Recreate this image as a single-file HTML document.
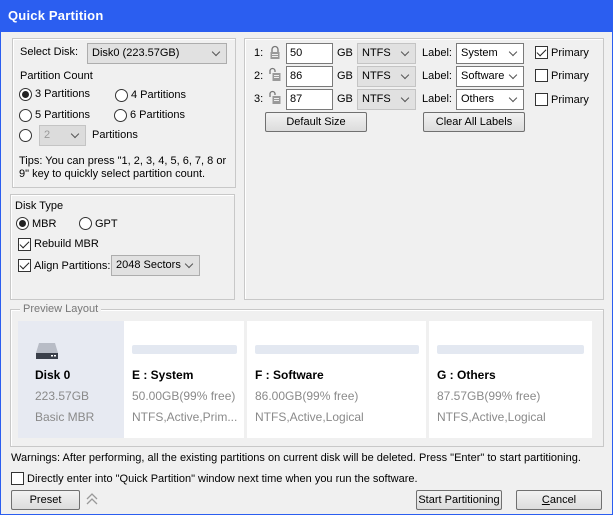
<!DOCTYPE html>
<html><head><style>
*{box-sizing:border-box;margin:0;padding:0}
body{width:613px;height:515px;overflow:hidden;background:#2b5ef0;font-family:"Liberation Sans",sans-serif;font-size:11px;color:#000;position:relative}
.a{position:absolute;white-space:nowrap}
.title{left:8px;top:8px;color:#fff;font-size:13px;font-weight:bold;letter-spacing:.2px}
.grp{position:absolute;border:1px solid #c8c8c8;box-shadow:inset 1px 1px 0 #fff}
.sel{position:absolute;border:1px solid #adadad;background:#e1e1e1;height:21px;padding:3px 4px}
.sel:after{content:"";position:absolute;right:7px;top:5px;width:5px;height:5px;border-right:1px solid #555;border-bottom:1px solid #555;transform:rotate(45deg)}
.inp{position:absolute;border:1px solid #7a7a7a;background:#fff;height:21px;padding:3px 3px}
.rad{position:absolute;width:13px;height:13px;border:1px solid #333;border-radius:50%;background:#fff}
.rad.on:after{content:"";position:absolute;left:2px;top:2px;width:7px;height:7px;border-radius:50%;background:#222}
.chk{position:absolute;width:13px;height:13px;border:1px solid #333;background:#fff}
.chk.on:after{content:"";position:absolute;left:3px;top:0px;width:4px;height:8px;border-right:1.5px solid #222;border-bottom:1.5px solid #222;transform:rotate(45deg)}
.btn{position:absolute;border:1px solid #707070;background:linear-gradient(#f2f2f2,#dcdcdc);height:20px;text-align:center;line-height:18px;border-radius:2px}
.cell{position:absolute;top:321px;height:117px;background:#fff}
.bar{position:absolute;top:24px;height:9px;background:#e3e8f1;border-radius:2px}
.cell .t{position:absolute;top:47px;font-weight:bold;font-size:12px}
.cell .g{position:absolute;color:#8a8a8a;font-size:12px}
</style></head><body>
<div class="a title">Quick Partition</div>
<div style="position:absolute;left:0;top:32px;width:613px;height:483px;background:#f0f0f0;border-left:1px solid #2b5ef0;border-right:1px solid #2b5ef0;border-bottom:1px solid #2b5ef0"></div>

<div class="grp" style="left:12px;top:38px;width:224px;height:150px"></div>
<div class="a" style="left:20px;top:46px">Select Disk:</div>
<div class="sel" style="left:87px;top:43px;width:140px">Disk0 (223.57GB)</div>
<div class="a" style="left:20px;top:70px">Partition Count</div>
<div class="rad on" style="left:19px;top:88px"></div><div class="a" style="left:35px;top:88px">3 Partitions</div>
<div class="rad" style="left:115px;top:89px"></div><div class="a" style="left:131px;top:89px">4 Partitions</div>
<div class="rad" style="left:19px;top:109px"></div><div class="a" style="left:35px;top:109px">5 Partitions</div>
<div class="rad" style="left:114px;top:109px"></div><div class="a" style="left:130px;top:109px">6 Partitions</div>
<div class="rad" style="left:19px;top:129px"></div>
<div class="sel" style="left:39px;top:125px;width:47px;height:21px;border-color:#c4c4c4;background:#dcdcdc;color:#999">2</div>
<div class="a" style="left:92px;top:129px">Partitions</div>
<div class="a" style="left:19px;top:155px;line-height:13px">Tips: You can press "1, 2, 3, 4, 5, 6, 7, 8 or<br>9" key to quickly select partition count.</div>

<div class="grp" style="left:10px;top:194px;width:225px;height:106px"></div>
<div class="a" style="left:15px;top:200px">Disk Type</div>
<div class="rad on" style="left:16px;top:217px"></div><div class="a" style="left:32px;top:218px">MBR</div>
<div class="rad" style="left:79px;top:217px"></div><div class="a" style="left:95px;top:218px">GPT</div>
<div class="chk on" style="left:18px;top:238px"></div><div class="a" style="left:34px;top:238px">Rebuild MBR</div>
<div class="chk on" style="left:18px;top:259px"></div><div class="a" style="left:34px;top:260px">Align Partitions:</div>
<div class="sel" style="left:111px;top:255px;width:89px">2048 Sectors</div>

<div class="grp" style="left:244px;top:38px;width:360px;height:262px"></div>
<div class="a" style="left:254px;top:47px">1:</div>
<div class="a" style="left:254px;top:70px">2:</div>
<div class="a" style="left:254px;top:93px">3:</div>
<svg class="a" style="left:268px;top:45px" width="14" height="60" viewBox="0 0 14 60">
<g fill="none" stroke="#777" stroke-width="1.3"><path d="M4 7V4.5a3 3 0 0 1 6 0V7"/><path d="M2 29V26a2.5 2.5 0 0 1 5 0V27"/><path d="M2 52V49a2.5 2.5 0 0 1 5 0V50"/></g>
<g fill="#999"><rect x="2.5" y="7" width="9" height="7"/><rect x="4.5" y="28" width="8" height="8"/><rect x="4.5" y="51" width="8" height="8"/></g>
<g stroke="#eee"><path d="M4 9.5h6M4 11.5h6M6 30.5h5M6 32.5h5M6 53.5h5M6 55.5h5"/></g></svg>
<div class="inp" style="left:286px;top:43px;width:47px">50</div>
<div class="inp" style="left:286px;top:66px;width:47px">86</div>
<div class="inp" style="left:286px;top:89px;width:47px">87</div>
<div class="a" style="left:337px;top:47px">GB</div><div class="a" style="left:337px;top:70px">GB</div><div class="a" style="left:337px;top:93px">GB</div>
<div class="sel" style="left:357px;top:43px;width:59px;border-color:#c4c4c4">NTFS</div>
<div class="sel" style="left:357px;top:66px;width:59px;border-color:#c4c4c4">NTFS</div>
<div class="sel" style="left:357px;top:89px;width:59px;border-color:#c4c4c4">NTFS</div>
<div class="a" style="left:422px;top:47px">Label:</div><div class="a" style="left:422px;top:70px">Label:</div><div class="a" style="left:422px;top:93px">Label:</div>
<div class="sel" style="left:456px;top:43px;width:68px;background:#fff;border-color:#7a7a7a">System</div>
<div class="sel" style="left:456px;top:66px;width:68px;background:#fff;border-color:#7a7a7a">Software</div>
<div class="sel" style="left:456px;top:89px;width:68px;background:#fff;border-color:#7a7a7a">Others</div>
<div class="chk on" style="left:535px;top:46px"></div><div class="a" style="left:551px;top:47px">Primary</div>
<div class="chk" style="left:535px;top:69px"></div><div class="a" style="left:551px;top:70px">Primary</div>
<div class="chk" style="left:535px;top:93px"></div><div class="a" style="left:551px;top:94px">Primary</div>
<div class="btn" style="left:265px;top:112px;width:102px">Default Size</div>
<div class="btn" style="left:423px;top:112px;width:102px">Clear All Labels</div>

<div class="grp" style="left:10px;top:309px;width:594px;height:138px"></div>
<div class="a" style="left:20px;top:303px;background:#f0f0f0;padding:0 3px;color:#777">Preview Layout</div>
<div class="a" style="left:18px;top:321px;width:106px;height:117px;background:#e7eaf2"></div>
<svg class="a" style="left:35px;top:343px" width="24" height="17" viewBox="0 0 24 17"><path d="M4 0h16l3 10H1z" fill="#b8bcc6"/><rect x="1" y="10" width="22" height="6" fill="#3a3f4a"/><rect x="16" y="12" width="2" height="1.5" fill="#fff"/><rect x="19" y="12" width="2" height="1.5" fill="#fff"/></svg>
<div class="a" style="left:35px;top:368px;font-weight:bold;font-size:12px">Disk 0</div>
<div class="a" style="left:35px;top:389px;font-size:12px;color:#8a8a8a">223.57GB</div>
<div class="a" style="left:35px;top:410px;font-size:12px;color:#8a8a8a">Basic MBR</div>
<div class="cell" style="left:124px;width:120px"><div class="bar" style="left:8px;width:105px"></div><div class="t" style="left:8px">E : System</div><div class="g" style="left:8px;top:68px">50.00GB(99% free)</div><div class="g" style="left:8px;top:89px">NTFS,Active,Prim...</div></div>
<div class="cell" style="left:247px;width:179px"><div class="bar" style="left:8px;width:164px"></div><div class="t" style="left:8px">F : Software</div><div class="g" style="left:8px;top:68px">86.00GB(99% free)</div><div class="g" style="left:8px;top:89px">NTFS,Active,Logical</div></div>
<div class="cell" style="left:429px;width:163px"><div class="bar" style="left:8px;width:147px"></div><div class="t" style="left:8px">G : Others</div><div class="g" style="left:8px;top:68px">87.57GB(99% free)</div><div class="g" style="left:8px;top:89px">NTFS,Active,Logical</div></div>

<div class="a" style="left:11px;top:452px">Warnings: After performing, all the existing partitions on current disk will be deleted. Press "Enter" to start partitioning.</div>
<div class="chk" style="left:11px;top:472px"></div><div class="a" style="left:27px;top:473px">Directly enter into "Quick Partition" window next time when you run the software.</div>
<div class="btn" style="left:11px;top:490px;width:69px">Preset</div>
<svg class="a" style="left:86px;top:492px" width="12" height="14" viewBox="0 0 12 14"><path d="M1 7l5-5 5 5M1 12l5-5 5 5" fill="none" stroke="#999" stroke-width="1.3"/></svg>
<div class="btn" style="left:416px;top:490px;width:86px">Start Partitioning</div>
<div class="btn" style="left:516px;top:490px;width:86px"><u>C</u>ancel</div>
</body></html>
